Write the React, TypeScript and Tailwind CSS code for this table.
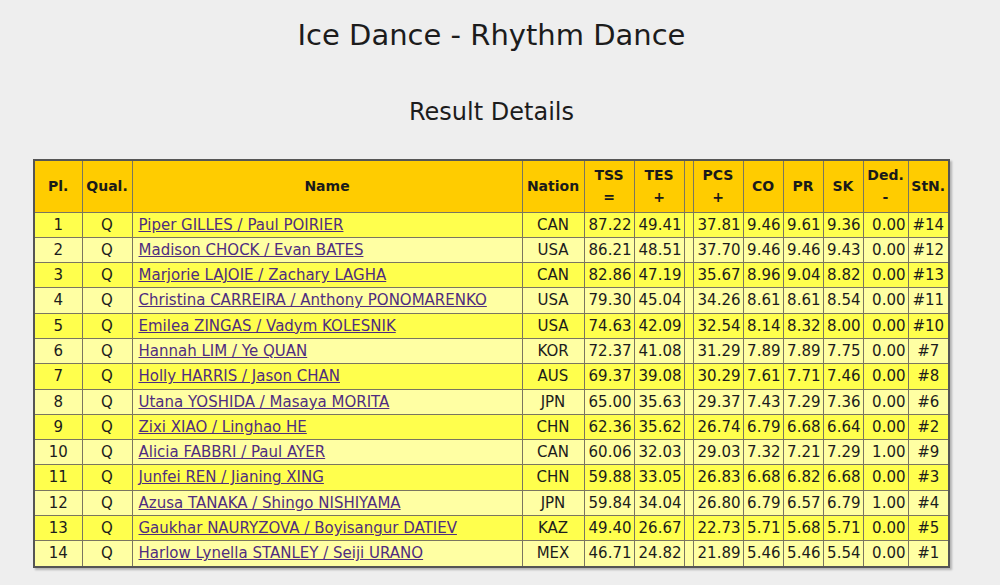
import React from 'react';

type Row = {
  pl: number;
  name: string;
  nation: string;
  tss: string;
  tes: string;
  pcs: string;
  co: string;
  pr: string;
  sk: string;
  ded: string;
  stn: string;
};

const rows: Row[] = [
  { pl: 1, name: 'Piper GILLES / Paul POIRIER', nation: 'CAN', tss: '87.22', tes: '49.41', pcs: '37.81', co: '9.46', pr: '9.61', sk: '9.36', ded: '0.00', stn: '#14' },
  { pl: 2, name: 'Madison CHOCK / Evan BATES', nation: 'USA', tss: '86.21', tes: '48.51', pcs: '37.70', co: '9.46', pr: '9.46', sk: '9.43', ded: '0.00', stn: '#12' },
  { pl: 3, name: 'Marjorie LAJOIE / Zachary LAGHA', nation: 'CAN', tss: '82.86', tes: '47.19', pcs: '35.67', co: '8.96', pr: '9.04', sk: '8.82', ded: '0.00', stn: '#13' },
  { pl: 4, name: 'Christina CARREIRA / Anthony PONOMARENKO', nation: 'USA', tss: '79.30', tes: '45.04', pcs: '34.26', co: '8.61', pr: '8.61', sk: '8.54', ded: '0.00', stn: '#11' },
  { pl: 5, name: 'Emilea ZINGAS / Vadym KOLESNIK', nation: 'USA', tss: '74.63', tes: '42.09', pcs: '32.54', co: '8.14', pr: '8.32', sk: '8.00', ded: '0.00', stn: '#10' },
  { pl: 6, name: 'Hannah LIM / Ye QUAN', nation: 'KOR', tss: '72.37', tes: '41.08', pcs: '31.29', co: '7.89', pr: '7.89', sk: '7.75', ded: '0.00', stn: '#7' },
  { pl: 7, name: 'Holly HARRIS / Jason CHAN', nation: 'AUS', tss: '69.37', tes: '39.08', pcs: '30.29', co: '7.61', pr: '7.71', sk: '7.46', ded: '0.00', stn: '#8' },
  { pl: 8, name: 'Utana YOSHIDA / Masaya MORITA', nation: 'JPN', tss: '65.00', tes: '35.63', pcs: '29.37', co: '7.43', pr: '7.29', sk: '7.36', ded: '0.00', stn: '#6' },
  { pl: 9, name: 'Zixi XIAO / Linghao HE', nation: 'CHN', tss: '62.36', tes: '35.62', pcs: '26.74', co: '6.79', pr: '6.68', sk: '6.64', ded: '0.00', stn: '#2' },
  { pl: 10, name: 'Alicia FABBRI / Paul AYER', nation: 'CAN', tss: '60.06', tes: '32.03', pcs: '29.03', co: '7.32', pr: '7.21', sk: '7.29', ded: '1.00', stn: '#9' },
  { pl: 11, name: 'Junfei REN / Jianing XING', nation: 'CHN', tss: '59.88', tes: '33.05', pcs: '26.83', co: '6.68', pr: '6.82', sk: '6.68', ded: '0.00', stn: '#3' },
  { pl: 12, name: 'Azusa TANAKA / Shingo NISHIYAMA', nation: 'JPN', tss: '59.84', tes: '34.04', pcs: '26.80', co: '6.79', pr: '6.57', sk: '6.79', ded: '1.00', stn: '#4' },
  { pl: 13, name: 'Gaukhar NAURYZOVA / Boyisangur DATIEV', nation: 'KAZ', tss: '49.40', tes: '26.67', pcs: '22.73', co: '5.71', pr: '5.68', sk: '5.71', ded: '0.00', stn: '#5' },
  { pl: 14, name: 'Harlow Lynella STANLEY / Seiji URANO', nation: 'MEX', tss: '46.71', tes: '24.82', pcs: '21.89', co: '5.46', pr: '5.46', sk: '5.54', ded: '0.00', stn: '#1' },
];

const th = 'border border-[#7a7560] px-[2px] text-[14px] font-bold text-[#1a1a1a] text-center leading-[22px]';
const td = 'border border-[#7a7560] px-[2px] py-[3px] text-[15px] leading-[18.3px]';

export default function App() {
  return (
    <div className="min-h-[585px] w-[1000px] bg-[#eeeeee] font-['DejaVu_Sans',Verdana,sans-serif] text-[#1c1c1c]">
      <div className="w-[983px]">
        <h1 className="pt-[14px] text-center text-[29px] leading-[42px]">Ice Dance - Rhythm Dance</h1>
        <h2 className="mt-[40px] text-center text-[24px] leading-[32px]">Result Details</h2>

        {/* Results table */}
        <div className="mt-[31px] flex justify-center">
          <table className="border-collapse border-2 border-[#555] shadow-[2px_2px_2px_rgba(0,0,0,0.25)]">
            <thead>
              <tr className="h-[52px] bg-[#ffcc00]">
                <th className={`${th} w-[48px]`}>Pl.</th>
                <th className={`${th} w-[50px]`}>Qual.</th>
                <th className={`${th} w-[390px]`}>Name</th>
                <th className={`${th} w-[62px]`}>Nation</th>
                <th className={`${th} w-[50px]`}>TSS<br />=</th>
                <th className={`${th} w-[50px]`}>TES<br />+</th>
                <th className={`${th} w-[9px] px-0`}></th>
                <th className={`${th} w-[50px]`}>PCS<br />+</th>
                <th className={`${th} w-[40px]`}>CO</th>
                <th className={`${th} w-[40px]`}>PR</th>
                <th className={`${th} w-[40px]`}>SK</th>
                <th className={`${th} w-[45px]`}>Ded.<br />-</th>
                <th className={`${th} w-[41px]`}>StN.</th>
              </tr>
            </thead>
            <tbody>
              {rows.map((r) => (
                <tr key={r.pl} className={r.pl % 2 === 1 ? 'bg-[#ffff4d]' : 'bg-[#ffffa3]'}>
                  <td className={`${td} text-center`}>{r.pl}</td>
                  <td className={`${td} text-center`}>Q</td>
                  <td className={`${td} pl-[6px] text-left`}>
                    <a href="#" className="text-[#4f2d7f] underline">{r.name}</a>
                  </td>
                  <td className={`${td} text-center`}>{r.nation}</td>
                  <td className={`${td} text-right`}>{r.tss}</td>
                  <td className={`${td} text-right`}>{r.tes}</td>
                  <td className={`${td} px-0`}></td>
                  <td className={`${td} text-right`}>{r.pcs}</td>
                  <td className={`${td} text-right`}>{r.co}</td>
                  <td className={`${td} text-right`}>{r.pr}</td>
                  <td className={`${td} text-right`}>{r.sk}</td>
                  <td className={`${td} text-right`}>{r.ded}</td>
                  <td className={`${td} text-center`}>{r.stn}</td>
                </tr>
              ))}
            </tbody>
          </table>
        </div>
      </div>
    </div>
  );
}
